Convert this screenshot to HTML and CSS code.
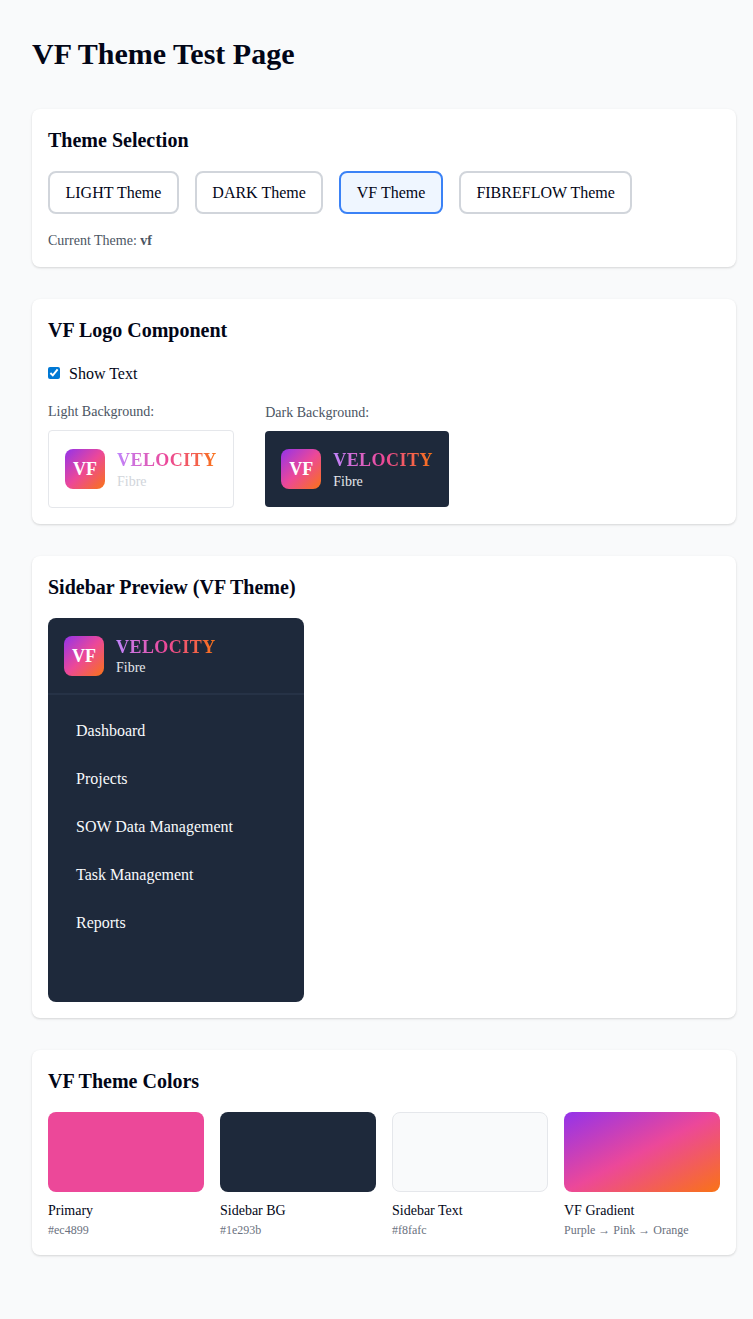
FILE: index.html
```html
<!DOCTYPE html>
<html lang="en">
<head>
<meta charset="utf-8">
<title>VF Theme Test Page</title>
<link rel="stylesheet" href="styles.css">
</head>
<body>
<main class="page">
  <h1>VF Theme Test Page</h1>
  <section class="card">
    <h2>Theme Selection</h2>
    <div class="themes">
      <button class="theme">LIGHT Theme</button>
      <button class="theme">DARK Theme</button>
      <button class="theme active">VF Theme</button>
      <button class="theme">FIBREFLOW Theme</button>
    </div>
    <p class="current">Current Theme: <strong>vf</strong></p>
  </section>
  <section class="card">
    <h2>VF Logo Component</h2>
    <label class="check"><input type="checkbox" checked><span>Show Text</span></label>
    <div class="logos">
      <div>
        <p class="caption">Light Background:</p>
        <div class="box light">
          <div class="logo"><div class="mark">VF</div><div class="words"><span class="name">VELOCITY</span><span class="sub">Fibre</span></div></div>
        </div>
      </div>
      <div>
        <p class="caption">Dark Background:</p>
        <div class="box dark">
          <div class="logo"><div class="mark">VF</div><div class="words"><span class="name">VELOCITY</span><span class="sub">Fibre</span></div></div>
        </div>
      </div>
    </div>
  </section>
  <section class="card">
    <h2>Sidebar Preview (VF Theme)</h2>
    <aside class="sidebar">
      <div class="head">
        <div class="logo"><div class="mark">VF</div><div class="words"><span class="name">VELOCITY</span><span class="sub">Fibre</span></div></div>
      </div>
      <nav class="menu">
        <div>Dashboard</div>
        <div>Projects</div>
        <div>SOW Data Management</div>
        <div>Task Management</div>
        <div>Reports</div>
      </nav>
    </aside>
  </section>
  <section class="card">
    <h2>VF Theme Colors</h2>
    <div class="colors">
      <div><div class="swatch primary"></div><p class="label">Primary</p><p class="value">#ec4899</p></div>
      <div><div class="swatch navy"></div><p class="label">Sidebar BG</p><p class="value">#1e293b</p></div>
      <div><div class="swatch pale"></div><p class="label">Sidebar Text</p><p class="value">#f8fafc</p></div>
      <div><div class="swatch gradient"></div><p class="label">VF Gradient</p><p class="value">Purple → Pink → Orange</p></div>
    </div>
  </section>
</main>
</body>
</html>
```
FILE: styles.css
```css
*, *::before, *::after { box-sizing: border-box; }
body { margin: 0; background: #f9fafb; color: #020617; font: 16px/24px "Liberation Serif", "Times New Roman", serif; }
h1, h2, p { margin: 0; }
.page { padding: 32px 17px 64px 32px; display: flex; flex-direction: column; gap: 32px; min-height: 1319px; }
h1 { font-size: 30px; line-height: 43px; height: 44.7px; }
.card { background: #fff; border-radius: 8px; padding: 16px; box-shadow: 0 1px 3px rgba(0,0,0,.1), 0 1px 2px rgba(0,0,0,.06); }
h2 { font-size: 20px; line-height: 30px; margin-bottom: 16px; }
.themes { display: flex; gap: 16px; }
.theme { font: inherit; color: inherit; background: #fff; border: 2px solid #d1d5db; border-radius: 8px; padding: 8px 15.5px 6px; height: 43.4px; white-space: nowrap; }
.theme.active { border-color: #3b82f6; background: #eff6ff; }
.current { margin-top: 16px; font-size: 14px; height: 21px; line-height: 22px; color: #4b5563; }
.check { display: flex; align-items: center; height: 24px; gap: 9px; }
.check input { margin: 0 0 1px; width: 12px; height: 12px; accent-color: #0078d4; }
.check span { padding-top: 1px; }
.logos { display: flex; align-items: center; gap: 31.6px; margin-top: 16px; }
.caption { font-size: 14px; height: 21px; line-height: 22.6px; color: #4b5563; margin-bottom: 8px; }
.box { padding: 16px; border-radius: 4px; }
.light { border: 1px solid #e5e7eb; }
.light .sub { color: #d1d5db; }
.box .sub { height: 20px; line-height: 21.6px; }
.dark, .sidebar { background: #1e293b; color: #e5e7eb; }
.logo { display: flex; align-items: center; gap: 12px; }
.mark { width: 40px; height: 40px; border-radius: 8px; display: grid; place-items: center; padding-bottom: 1px; color: #fff; font-weight: 700; font-size: 18px; background: linear-gradient(135deg, #9333ea, #ec4899 50%, #f97316); }
.words { display: flex; flex-direction: column; }
.name { font-weight: 700; font-size: 18px; height: 24px; line-height: 26px; letter-spacing: .45px; color: transparent; background: linear-gradient(90deg, #c084fc, #ec4899 50%, #f97316); background-clip: text; -webkit-background-clip: text; }
.sub { font-size: 14px; line-height: 20px; }
.sidebar { width: 256px; height: 384px; border-radius: 8px; }
.head { padding: 16px 16px 15px; border-bottom: 2px solid #263246; }
.menu { padding: 16px; }
.menu div { padding: 8px 12px; height: 40px; margin-bottom: 8px; color: #f8fafc; }
.colors { display: grid; grid-template-columns: repeat(4, 1fr); gap: 16px; }
.swatch { height: 80px; border-radius: 8px; margin-bottom: 8px; }
.primary { background: #ec4899; }
.navy { background: #1e293b; }
.pale { background: #f9fafb; border: 1px solid #e5e7eb; }
.gradient { background: linear-gradient(to bottom right, #9333ea, #ec4899 50%, #f97316); }
.label { font-size: 14px; line-height: 21px; }
.value { font-size: 12px; line-height: 18px; color: #6b7280; }
```
